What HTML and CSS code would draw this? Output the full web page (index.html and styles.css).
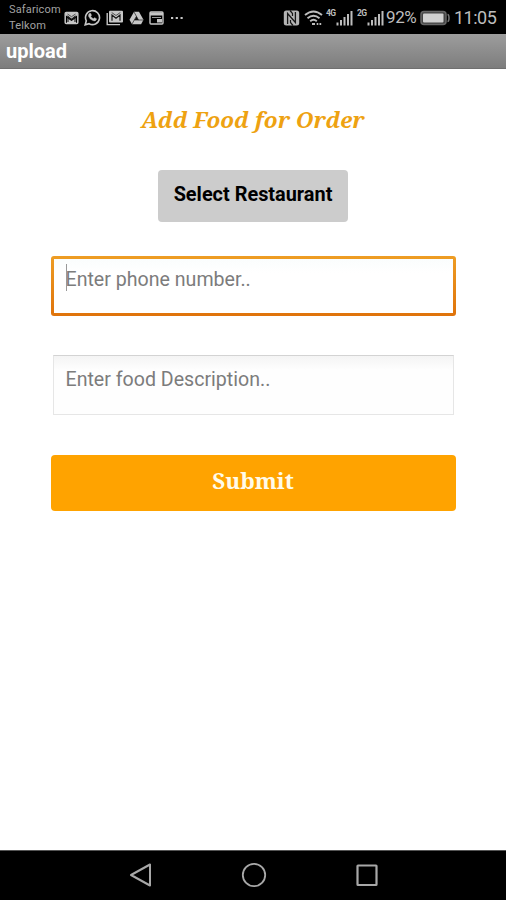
FILE: index.html
```html
<!DOCTYPE html>
<html lang="en">
<head>
<meta charset="utf-8">
<title>upload</title>
<link rel="stylesheet" href="styles.css">
</head>
<body>
<div class="status">
  <div class="carriers"><span>Safaricom</span><span>Telkom</span></div>
  <div class="notices">
    <svg width="15" height="14" viewBox="0 0 15 14"><rect x="1.200" y="1.600" width="12.600" height="10.800" rx="1" fill="none" stroke="#c6c6c6" stroke-width="1.500"/><path d="M2 2h11v2.500L7.500 8.500 2 4.500zM3 7l4.500 3L12 7v5H3z" fill="#c6c6c6"/><path d="M4 11V5.500l3.500 3 3.500-3V11" fill="none" stroke="#171717" stroke-width="1.100"/><path d="M3.500 3l4 2.700 4-2.700" fill="none" stroke="#444" stroke-width=".9"/></svg>
    <svg width="17" height="17" viewBox="0 0 17 17"><path d="M1.200 15.800l1.100-4A7 7 0 1 1 5.100 14.700z" fill="none" stroke="#c6c6c6" stroke-width="1.600"/><path d="M5.400 4.500l1.200-.2.900 2-.8 1q.9 1.800 2.700 2.500l1-1.100 2 1-.2 1.200q-1 1.500-3.200.7-3.300-1.200-4.400-4.300-.3-1.700.8-2.800z" fill="#c6c6c6" stroke="#c6c6c6" stroke-width=".5"/></svg>
    <svg width="18" height="16" viewBox="0 0 18 16"><path d="M1.200 3v11.600H14" fill="none" stroke="#c6c6c6" stroke-width="1.400"/><rect x="3" y=".8" width="14" height="11.700" rx="1" fill="#c6c6c6"/><path d="M6 10.800V5l4 3.200L14 5v5.800" fill="none" stroke="#171717" stroke-width="1.200"/><path d="M5.700 2.500L10 5.500l4.300-3" fill="none" stroke="#444" stroke-width=".9"/></svg>
    <svg width="15" height="14" viewBox="0 0 15 14"><path d="M5 .8h5l4.500 8-2.400 4.400H3L.5 8.800z" fill="#c6c6c6"/><path d="M5 1l4.600 8.200M7.500 5.200L3 13M5.400 9h9" stroke="#333" stroke-width=".8"/><path d="M7.500 5.400l2 3.500h-4z" fill="#111"/></svg>
    <svg width="15" height="14" viewBox="0 0 15 14"><rect x="1" y="1" width="13" height="12" rx="1" fill="none" stroke="#c6c6c6" stroke-width="1.400"/><path d="M1 3h13" stroke="#c6c6c6" stroke-width="3"/><path d="M3 6.500h9" stroke="#999"/><path d="M8 8h5v3.500H8z" fill="#c6c6c6"/></svg>
    <svg width="14" height="4" viewBox="0 0 14 4"><path d="M1 1h2.200v2H1zM5.700 1h2.200v2H5.700zM10.500 1h2.200v2h-2.200z" fill="#c6c6c6"/></svg>
  </div>
  <div class="system">
    <svg class="nfc" width="17" height="16" viewBox="0 0 17 16"><rect x=".8" y=".5" width="15.400" height="15" rx="2.500" fill="#b4b4b4"/><path d="M4.600 14V3.500l7.800 9V2" fill="none" stroke="#161616" stroke-width="1.300"/><path d="M7 .5l2.500 3v2.500M10 15.500l-2.500-3V10" fill="none" stroke="#161616" stroke-width="1.200"/></svg>
    <svg class="wifi" width="19" height="16" viewBox="0 0 19 16" fill="none" stroke="#bdbdbd" stroke-width="1.900"><path d="M1 5Q9.500-2.200 18 5M3.500 8.200q6-5 12 0M6.200 11.200q3.300-2.800 6.600 0"/><path d="M8 14h3M12.700 14h1.600M15.500 14h1.700" stroke-width="2.200"/></svg>
    <span class="net">4G</span>
    <svg class="bars" width="17" height="16" viewBox="0 0 17 16"><path d="M1.500 15.500v-3M5 15.500V10M8.500 15.500V7M12 15.500V4M15.500 15.500V1" stroke="#bdbdbd" stroke-width="2"/></svg>
    <span class="net net2">2G</span>
    <svg class="bars" width="17" height="16" viewBox="0 0 17 16"><path d="M1.500 15.500v-3M5 15.500V10M8.500 15.500V7M12 15.500V4M15.500 15.500V1" stroke="#bdbdbd" stroke-width="2"/></svg>
    <span class="percent">92%</span>
    <svg class="battery" width="30" height="16" viewBox="0 0 30 16"><rect x="1" y="1.500" width="25" height="13" rx="3" fill="#444" stroke="#666" stroke-width="1.500"/><rect x="3" y="3.500" width="20.500" height="9" rx="1" fill="#d0d0d0"/><path d="M27.500 4.500q1.500 0 1.500 3.500t-1.500 3.500" fill="none" stroke="#777" stroke-width="1.500"/></svg>
    <span class="clock">11:05</span>
  </div>
</div>
<header class="titlebar">upload</header>
<main class="form">
  <h1 class="heading">Add Food for Order</h1>
  <button class="select">Select Restaurant</button>
  <div class="field focused"><span class="caret"></span>Enter phone number..</div>
  <div class="field plain">Enter food Description..</div>
  <button class="submit">Submit</button>
</main>
<nav class="navbar">
  <svg width="24" height="26" viewBox="0 0 24 26"><path d="M21 2.500v21L2 13z" fill="none" stroke="#a8a8a8" stroke-width="2" stroke-linejoin="round"/></svg>
  <svg width="26" height="26" viewBox="0 0 26 26"><circle cx="13" cy="13" r="11.200" fill="none" stroke="#a8a8a8" stroke-width="1.800"/></svg>
  <svg width="24" height="26" viewBox="0 0 24 26"><rect x="2.500" y="3.500" width="19" height="19.500" rx=".5" fill="none" stroke="#a8a8a8" stroke-width="2.200"/></svg>
</nav>
</body>
</html>
```
FILE: styles.css
```css
* { box-sizing: border-box; }
body {
  margin: 0;
  height: 900px;
  display: flex;
  flex-direction: column;
  background: #fff;
  font-family: Roboto, "Liberation Sans", sans-serif;
  overflow: hidden;
}
svg { display: block; flex: none; }
.status {
  height: 34px;
  flex: none;
  display: flex;
  align-items: center;
  padding: 1px 10px 0 9px;
  background: #000;
  color: #bdbdbd;
}
.carriers {
  width: 55px;
  display: flex;
  flex-direction: column;
  padding-top: 1px;
  font-size: 11px;
  line-height: 16px;
  letter-spacing: .15px;
  color: #a2a2a2;
}
.notices { display: flex; align-items: center; gap: 5px; }
.notices svg:last-child { margin-left: 1px; }
.system { display: flex; align-items: center; margin-left: auto; }
.nfc { margin-right: 1px; }
.wifi { margin-left: 3px; }
.net {
  width: 10px;
  margin: 0 0 9px 4px;
  font-size: 8.500px;
  line-height: 8px;
  font-weight: 700;
  letter-spacing: -.6px;
}
.system .wifi + .net { margin-left: 3px; }
.net2 { margin-left: 4px; }
.percent { width: 34px; margin-left: 2px; padding-bottom: 1px; font-size: 17px; letter-spacing: -.4px; }
.clock { width: 42px; margin-left: 4px; font-size: 18px; letter-spacing: -.5px; white-space: nowrap; }
.titlebar {
  height: 35px;
  flex: none;
  padding-left: 6px;
  background: linear-gradient(#9d9d9d, #7d7d7d);
  border-bottom: 1px solid #707070;
  color: #fff;
  font-size: 20px;
  font-weight: 700;
  line-height: 35px;
}
.form {
  flex: 1;
  display: flex;
  flex-direction: column;
  align-items: center;
  padding-top: 35px;
}
.heading {
  height: 32px;
  margin: 0;
  color: #eea211;
  font: italic 700 22.400px/32px "Noto Serif", "DejaVu Serif Condensed", "DejaVu Serif", serif;
  font-stretch: condensed;
  white-space: nowrap;
}
.select, .submit { border: 0; border-radius: 4px; font-family: inherit; font-weight: 700; }
.select {
  width: 190px;
  height: 52px;
  margin-top: 34px;
  padding: 0 0 4px;
  background: #ccc;
  color: #000;
  font-size: 19.900px;
  white-space: nowrap;
}
.field {
  position: relative;
  color: #7c7c7c;
  font-size: 19.600px;
  line-height: 24px;
}
.focused {
  width: 405px;
  height: 60px;
  margin-top: 34px;
  padding: 9px 12px;
  border: 3px solid transparent;
  border-radius: 3px;
  background: linear-gradient(#fafdfd, #fff 14px) padding-box, linear-gradient(#ee9d24, #df730b) border-box;
}
.caret { position: absolute; left: 12px; top: 5px; width: 1px; height: 27px; background: #999; }
.plain {
  width: 401px;
  height: 60px;
  margin-top: 39px;
  padding: 12px 12px;
  border: 1px solid #e6e6e6;
  border-top-color: #d3d3d3;
  background: linear-gradient(#f4f4f4, #fefefe 14px);
}
.submit {
  width: 405px;
  height: 56px;
  margin-top: 40px;
  padding: 0 0 5px;
  background: #ffa300;
  color: #fffbea;
  font: 700 22.400px/30px "Noto Serif", "DejaVu Serif Condensed", "DejaVu Serif", serif;
  font-stretch: condensed;
}
.navbar {
  height: 50px;
  flex: none;
  display: flex;
  align-items: center;
  justify-content: center;
  gap: 88px;
  padding: 0 0 2px 1px;
  background: #000;
  border-top: 1px solid #555;
}
```
